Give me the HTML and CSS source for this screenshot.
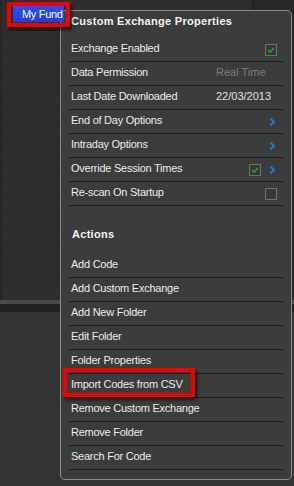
FILE: index.html
```html
<!DOCTYPE html>
<html lang="en">
<head>
    <meta charset="UTF-8">
    <meta name="viewport" content="width=device-width, initial-scale=1.0">
    <title>Custom Exchange Properties</title>
    <link rel="stylesheet" href="styles.css">
</head>
<body>
    <div class="workspace">
        <div class="top-area">
            <div class="panel">
                <span class="fund-label">My Fund</span>
            </div>
            <div class="side"></div>
        </div>
        <div class="panel-foot"></div>
        <div class="lower-area"></div>
    </div>

    <div class="menu">
        <div class="menu-title">Custom Exchange Properties</div>
        <div class="menu-row">
            <span class="row-label">Exchange Enabled</span>
            <span class="check checked"><svg width="12" height="12" viewBox="0 0 12 12"><polyline points="2.5,6 5,8.5 9.5,3.5" fill="none" stroke="#22a022" stroke-width="2"/></svg></span>
        </div>
        <div class="menu-row">
            <span class="row-label fixed">Data Permission</span>
            <span class="row-value muted">Real Time</span>
        </div>
        <div class="menu-row">
            <span class="row-label fixed">Last Date Downloaded</span>
            <span class="row-value">22/03/2013</span>
        </div>
        <div class="menu-row">
            <span class="row-label">End of Day Options</span>
            <span class="chevron"><svg width="8" height="10" viewBox="0 0 8 10"><polyline points="1.5,1.5 5,5 1.5,8.5" fill="none" stroke="#1b7bd6" stroke-width="2"/></svg></span>
        </div>
        <div class="menu-row">
            <span class="row-label">Intraday Options</span>
            <span class="chevron"><svg width="8" height="10" viewBox="0 0 8 10"><polyline points="1.5,1.5 5,5 1.5,8.5" fill="none" stroke="#1b7bd6" stroke-width="2"/></svg></span>
        </div>
        <div class="menu-row">
            <span class="row-label">Override Session Times</span>
            <span class="check checked"><svg width="12" height="12" viewBox="0 0 12 12"><polyline points="2.5,6 5,8.5 9.5,3.5" fill="none" stroke="#22a022" stroke-width="2"/></svg></span>
            <span class="chevron"><svg width="8" height="10" viewBox="0 0 8 10"><polyline points="1.5,1.5 5,5 1.5,8.5" fill="none" stroke="#1b7bd6" stroke-width="2"/></svg></span>
        </div>
        <div class="menu-row">
            <span class="row-label">Re-scan On Startup</span>
            <span class="check"></span>
        </div>

        <div class="menu-section">Actions</div>
        <div class="menu-row"><span class="row-label">Add Code</span></div>
        <div class="menu-row"><span class="row-label">Add Custom Exchange</span></div>
        <div class="menu-row"><span class="row-label">Add New Folder</span></div>
        <div class="menu-row"><span class="row-label">Edit Folder</span></div>
        <div class="menu-row"><span class="row-label">Folder Properties</span></div>
        <div class="menu-row"><span class="row-label">Import Codes from CSV</span></div>
        <div class="menu-row"><span class="row-label">Remove Custom Exchange</span></div>
        <div class="menu-row"><span class="row-label">Remove Folder</span></div>
        <div class="menu-row"><span class="row-label">Search For Code</span></div>
    </div>

    <!-- annotation boxes drawn over the screenshot -->
    <div class="mark mark-fund"></div>
    <div class="mark mark-import"></div>
</body>
</html>
```

FILE: styles.css
```css
* {
    margin: 0;
    padding: 0;
    box-sizing: border-box;
}

body {
    font-family: 'Liberation Sans', Arial, sans-serif;
    font-size: 11px;
    background: #333333;
    width: 294px;
    height: 486px;
    overflow: hidden;
    position: relative;
    color: #ebebeb;
}

.workspace {
    display: flex;
    flex-direction: column;
    height: 100%;
}

.top-area {
    display: flex;
    height: 300px;
}

.panel {
    width: 253px;
    border-left: 2px solid #262626;
    border-right: 1px solid #1c1c1c;
    background: repeating-linear-gradient(135deg, #313131 0 1px, #2c2c2c 1px 3px);
    padding: 6px 0 0 11px;
}

.side {
    flex: 1;
    background: #282828;
}

.panel-foot {
    height: 12px;
    border-top: 4px solid #4a4a4a;
    background: #222222;
}

.lower-area {
    flex: 1;
    background: #333333;
}

.fund-label {
    display: inline-block;
    position: relative;
    z-index: 2;
    height: 16px;
    line-height: 16px;
    padding: 0 1px 0 9px;
    letter-spacing: -0.3px;
    white-space: nowrap;
    color: #ffffff;
    background: linear-gradient(180deg, #2a4ef0 0%, #1f3fd8 100%);
}

.menu {
    position: absolute;
    left: 60px;
    top: 10px;
    width: 232px;
    height: 470px;
    z-index: 1;
    background: #3b3c3c;
    border: 1px solid #8a8a8a;
    border-radius: 5px;
    padding: 0 8px 9px;
}

.menu-title {
    font-weight: bold;
    letter-spacing: 0.3px;
    color: #f4f4f4;
    line-height: 16px;
    height: 27px;
    padding: 2px 2px 9px;
}

.menu-section {
    font-weight: bold;
    letter-spacing: 0.3px;
    color: #f4f4f4;
    line-height: 16px;
    height: 48px;
    padding: 20px 2px 12px 3px;
}

.menu-row {
    display: flex;
    align-items: center;
    gap: 8px;
    height: 24px;
    padding: 0 6px 0 2px;
    border-bottom: 1px solid #1d1d1d;
    letter-spacing: -0.25px;
}

.row-label {
    flex: 1;
    line-height: 20px;
    padding-bottom: 3px;
    white-space: nowrap;
}

.row-label.fixed {
    flex: 0 0 137px;
}

.row-value {
    flex: 1;
    line-height: 20px;
    padding-bottom: 3px;
    letter-spacing: 0;
    color: #e0e0e0;
}

.row-value.muted {
    color: #7c7c7c;
}

.check {
    width: 12px;
    height: 12px;
    border: 1px solid #707070;
    background: #363737;
    display: flex;
    align-items: center;
    justify-content: center;
}

.check svg {
    display: block;
}

.chevron {
    width: 8px;
    height: 10px;
    display: flex;
}

.mark {
    position: absolute;
    z-index: 3;
    border: 4px solid #f00000;
    box-shadow: 2px 3px 3px rgba(0, 0, 0, 0.6);
}

.mark-fund {
    left: 7px;
    top: 2px;
    width: 63px;
    height: 25px;
}

.mark-import {
    left: 63px;
    top: 368px;
    width: 132px;
    height: 29px;
}
```
